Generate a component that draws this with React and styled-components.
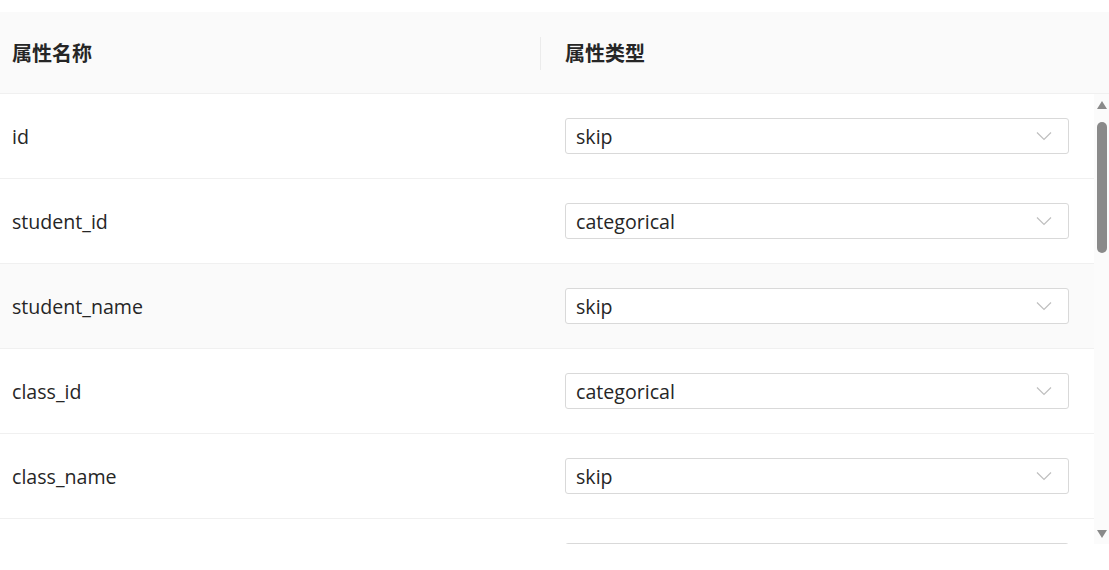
import React from "react";
import styled, { createGlobalStyle } from "styled-components";

const GlobalStyle = createGlobalStyle`
	html, body {
		margin: 0;
		padding: 0;
		background: #ffffff;
	}
	body {
		font-family: "Open Sans", "Noto Sans CJK SC", sans-serif;
		color: rgba(0, 0, 0, 0.85);
		overflow: hidden;
	}
`;

const fields = [
	{ name: "id", type: "skip" },
	{ name: "student_id", type: "categorical" },
	{ name: "student_name", type: "skip", hovered: true },
	{ name: "class_id", type: "categorical" },
	{ name: "class_name", type: "skip" },
	{ name: "score", type: "numerical" },
];

const Chevron = () => (
	<svg width="16" height="10" viewBox="0 0 16 10">
		<polyline
			points="1,1.5 8,8.5 15,1.5"
			fill="none"
			stroke="#bfbfbf"
			strokeWidth="1.2"
		/>
	</svg>
);

export default function App() {
	return (
		<>
			<GlobalStyle />
			<TableWrapper>
				<HeaderRow>
					<HeaderCell>属性名称</HeaderCell>
					<HeaderCell divider>属性类型</HeaderCell>
				</HeaderRow>
				<BodyWrapper>
					<Rows>
						{fields.map(field => (
							<Row key={field.name} hovered={field.hovered}>
								<NameCell>{field.name}</NameCell>
								<TypeCell>
									<Select>
										<span>{field.type}</span>
										<Chevron />
									</Select>
								</TypeCell>
							</Row>
						))}
					</Rows>
					<Scrollbar>
						<Arrow />
						<Thumb />
						<Track />
						<Arrow down />
					</Scrollbar>
				</BodyWrapper>
			</TableWrapper>
		</>
	);
}

const TableWrapper = styled.div`
	margin-top: 12px;
	width: 1109px;
`;

const HeaderRow = styled.div`
	display: grid;
	grid-template-columns: 540px 1fr;
	height: 82px;
	background: #fafafa;
	border-bottom: 1px solid #f0f0f0;
	box-sizing: border-box;
`;

const HeaderCell = styled.div`
	position: relative;
	display: flex;
	align-items: center;
	padding-left: ${p => (p.divider ? "25px" : "12px")};
	font-size: 20px;
	font-weight: 700;
	color: #262626;

	${p =>
		p.divider &&
		`
		&::before {
			content: "";
			position: absolute;
			left: 0;
			top: 25px;
			height: 33px;
			width: 1px;
			background: #ebebeb;
		}
	`}
`;

const BodyWrapper = styled.div`
	display: flex;
	height: 450px;
	overflow: hidden;
`;

const Rows = styled.div`
	width: 1094px;
	display: flex;
	flex-direction: column;
`;

const Row = styled.div`
	flex: none;
	display: grid;
	grid-template-columns: 540px 1fr;
	height: 85px;
	box-sizing: border-box;
	border-bottom: 1px solid #f0f0f0;
	background: ${p => (p.hovered ? "#fafafa" : "#ffffff")};
`;

const NameCell = styled.div`
	display: flex;
	align-items: center;
	padding-left: 12px;
	padding-top: 1px;
	font-size: 19.6px;
	color: #262626;
`;

const TypeCell = styled.div`
	display: flex;
	align-items: center;
	padding-left: 25px;
	padding-right: 25px;
`;

const Select = styled.div`
	flex: 1;
	height: 36px;
	box-sizing: border-box;
	display: flex;
	align-items: center;
	justify-content: space-between;
	padding: 1px 16px 0 10px;
	border: 1px solid #d9d9d9;
	border-radius: 3px;
	background: #ffffff;
	font-size: 19.6px;
	color: #262626;

	svg {
		margin-top: -2px;
	}
`;

const Scrollbar = styled.div`
	width: 15px;
	display: flex;
	flex-direction: column;
	align-items: center;
	background: #fbfbfb;
	padding: 7px 0 6px;
	box-sizing: border-box;
`;

const Arrow = styled.div`
	width: 0;
	height: 0;
	border-left: 5.5px solid transparent;
	border-right: 5.5px solid transparent;
	${p =>
		p.down
			? "border-top: 8px solid #8a8a8a;"
			: "border-bottom: 8px solid #8a8a8a;"}
	margin-left: 1px;
`;

const Thumb = styled.div`
	width: 10px;
	height: 131px;
	margin-top: 13px;
	margin-left: 1px;
	border-radius: 5px;
	background: #8a8a8a;
`;

const Track = styled.div`
	flex: 1;
`;
